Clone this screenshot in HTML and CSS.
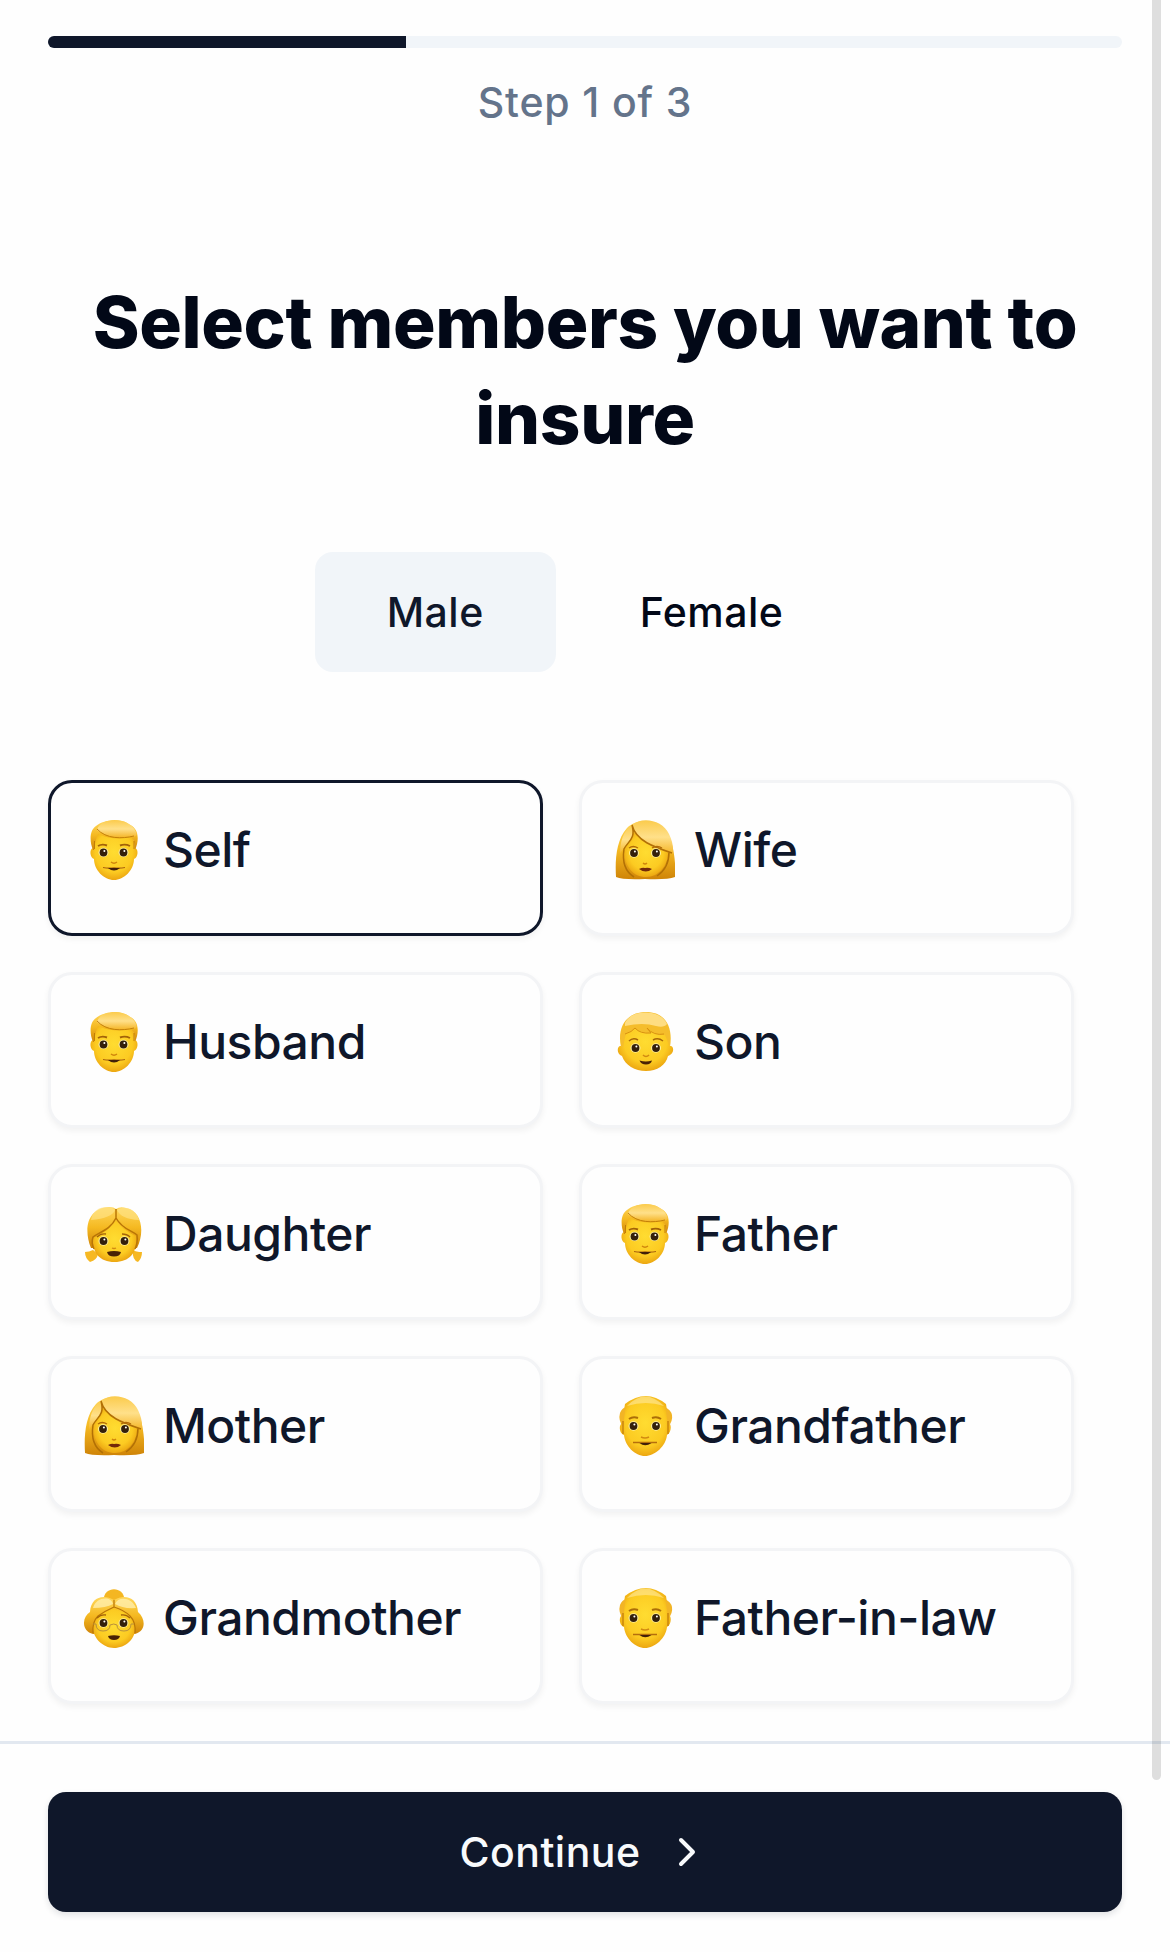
FILE: index.html
```html
<!DOCTYPE html>
<html lang="en">
<head>
<meta charset="utf-8">
<title>Select members</title>
<link rel="stylesheet" href="styles.css">
</head>
<body>
<svg class="defs" width="0" height="0" aria-hidden="true">
  <defs>
    <radialGradient id="skin" cx=".5" cy=".45" r=".6"><stop offset="0" stop-color="#ffdc31"/><stop offset=".65" stop-color="#fccb22"/><stop offset="1" stop-color="#e79b0c"/></radialGradient>
    <linearGradient id="hair" x1="0" y1="0" x2="0" y2="1"><stop offset="0" stop-color="#ffd75c"/><stop offset=".5" stop-color="#f5b921"/><stop offset="1" stop-color="#cf8408"/></linearGradient>
    <linearGradient id="shine" x1="0" y1="0" x2="0" y2="1"><stop offset="0" stop-color="#fbcb4c"/><stop offset=".5" stop-color="#ffe08a"/><stop offset="1" stop-color="#f4b425"/></linearGradient>
    <g id="eye"><ellipse rx="5" ry="4.7" fill="#fff0a0"/><circle r="3.9" fill="#34200b"/><circle cx=".9" cy="-1.4" r="1" fill="#fff"/></g>
    <g id="man">
      <path d="M9 28C5 29 6 38 10 39C10 50 20 60 30 60S50 50 50 39C54 38 55 29 51 28L48 9H12Z" fill="url(#skin)"/>
      <path d="M9 30C5 20 6 10 12 6C20-1 39-2 46 5C54 8 56 19 51 30L50 22C49 18 47 17 45 17C32 20 20 17 14 14C12 19 11 22 10 30Z" fill="url(#hair)"/>
      <path d="M13 10C16-3 45-4 52 12C54 16 51 17 47 17C35 19 24 17 16 12Q14 11 13 10Z" fill="url(#shine)"/>
      <path d="M13 9C22 19 38 19 50 16M10.500 21V29M50 21V29" fill="none" stroke="#bd7906" stroke-width=".9"/>
      <path d="M14 26Q18 23.500 23 25.500M36 25.500Q41 23.500 46 26" fill="none" stroke="#a36308" stroke-width="1.900"/>
      <use href="#eye" x="19.500" y="32.500"/><use href="#eye" x="39.500" y="32.500"/>
      <path d="M27 42Q30 44.500 33 42" fill="none" stroke="#cf850c" stroke-width="1.400"/>
      <path d="M19 47.500Q24 48.500 30 47.800Q36 48.500 41 47.500" fill="none" stroke="#a9620d" stroke-width="1.200"/><path d="M24 48H36Q30 53 24 48Z" fill="#422009"/>
    </g>
    <g id="woman">
      <path d="M1 57C0 41 1 20 12 8C22-2 39-1 49 9C59 20 61 43 60 57Q52 60 30 59Q8 60 1 57Z" fill="url(#hair)"/>
      <path d="M9 31L18 12L53 29C54 45 44 57 31 57S10 47 9 31Z" fill="url(#skin)"/>
      <path d="M17 5C27-4 48 0 54 14Q59 24 58 34C42 29 24 24 17 5Z" fill="url(#shine)"/>
      <path d="M17 5C21 19 12 22 5 34C5 22 8 11 17 5Z" fill="url(#shine)"/>
      <path d="M17 5C21 21 39 27 57 33M17 5C21 19 13 21 9 29C7 42 11 52 19 57M54 32Q54 48 42 56" fill="none" stroke="#b27005" stroke-width="1.500"/>
      <path d="M14 28Q18 25 23 28M37 28Q42 25 47 28" fill="none" stroke="#b16b08" stroke-width="1.300"/>
      <use href="#eye" x="19" y="33"/><use href="#eye" x="41" y="33"/>
      <path d="M28 43Q30 45 32 43" fill="none" stroke="#cf850c" stroke-width="1.300"/>
      <path d="M24 49Q28 47 30 48Q33 47 37 49Q31 54 24 49Z" fill="#742909"/>
    </g>
    <g id="boy">
      <path d="M6 34C2 33 1 42 7 44C10 53 20 59 31 59S51 53 53 44C60 42 59 33 55 34L52 14Q31-3 10 14Z" fill="url(#skin)"/>
      <path d="M6 35C2 17 10 0 31 0S58 17 55 35L50 23Q39 23 33 16L36 21Q25 21 20 16Q17 19 11 21L8 35Z" fill="#f5bd2b"/>
      <path d="M10 11C16-3 46-3 52 12Q49 16 41 14Q28 10 10 14Z" fill="#ffe391" opacity=".85"/>
      <path d="M10 22Q17 20 20 16Q25 22 36 21L32 16Q39 24 49 22" fill="none" stroke="#d89012" stroke-width="1"/>
      <path d="M14 29Q18 25 23 28M38 28Q43 25 48 29" fill="none" stroke="#a7670a" stroke-width="1.500"/>
      <use href="#eye" x="20.500" y="36"/><use href="#eye" x="41" y="36"/>
      <path d="M28 43Q31 46 34 43" fill="none" stroke="#d18a11" stroke-width="1.600"/>
      <path d="M24.500 48.500Q31 50.500 37 48.500Q36 52.500 31 52.500T24.500 48.500Z" fill="#492105"/>
    </g>
    <g id="girl">
      <path d="M9 46Q5 48 1 48Q1 54 6 58Q13 56 14 50ZM49 46Q48 56 54 58Q58 54 58 48Q52 48 49 46Z" fill="#f6b823"/>
      <path d="M7 44C-1 24 4 4 25 3Q30 3 32 5Q36 2 42 4C58 7 61 28 53 44Z" fill="url(#hair)"/>
      <path d="M9 34Q27 26 32 16Q38 26 52 32C54 49 45 58 30.500 58S8 49 9 34Z" fill="url(#skin)"/>
      <path d="M7 16C9 1 27 1 31 6Q28 14 7 16ZM33 6C42 0 53 7 55 16Q37 15 33 6Z" fill="#ffe488" opacity=".65"/>
      <path d="M32 5V14C27 25 16 28 9 33Q7 39 10 45M32 14C38 25 47 26 53 31Q54 39 51 45" fill="none" stroke="#b97506" stroke-width="1.500"/>
      <path d="M13 33Q17 29 22 30M38 30Q43 30 46 33" fill="none" stroke="#a4630a" stroke-width="1.300"/>
      <use href="#eye" x="19.500" y="37"/><use href="#eye" x="40.500" y="37"/>
      <path d="M28 44Q30 45 32 44" fill="none" stroke="#d18a11" stroke-width="1.300"/>
      <path d="M23 48Q30 46 37 48Q36 52.500 30 52.500T23 48Z" fill="#492105"/>
    </g>
    <g id="grandpa">
      <path d="M7 27C3 30 5 38 9 39C10 50 20 60 30 60S51 50 52 39C56 37 57 29 54 27L51 8Q31-8 10 8Z" fill="url(#skin)"/>
      <path d="M11 11Q7 12 5 17Q3 24 8 31Q9 22 10 15ZM50 11Q56 14 57 19Q58 25 53 31Q52 22 51 15Z" fill="#f2b426"/>
      <path d="M12 10Q30-9 49 10Q31 4 12 10Z" fill="#ffe99e" opacity=".6"/>
      <path d="M8 25V38M53 25V38" fill="none" stroke="#bf7908" stroke-width="1.200"/>
      <path d="M14 23Q18 20 23 22M37 22Q42 20 46 23" fill="none" stroke="#ac6e08" stroke-width="2"/>
      <use href="#eye" x="18.500" y="30"/><use href="#eye" x="41" y="30"/>
      <path d="M26 41Q30 43 34 41" fill="none" stroke="#d18a11" stroke-width="1.400"/>
      <path d="M18 46.500Q24 46.500 30 46.500Q36 46.500 42 46.500" fill="none" stroke="#b56e0c" stroke-width="1.500"/><path d="M24.500 47H36.500Q30 51.500 24.500 47Z" fill="#422009"/>
    </g>
    <g id="grandma">
      <path d="M20 14C17-3 43-3 40 14Z" fill="#f4b622"/>
      <path d="M9 46C-3 43-2 29 6 24C7 9 19 6 30 12C41 6 53 9 54 24C62 31 62 43 51 46Z" fill="url(#hair)"/>
      <path d="M9 36Q11 28 20 24L30 20L42 25Q50 29 51 37C53 51 41 60 30 60S7 49 9 36Z" fill="url(#skin)"/>
      <path d="M9 20C12 8 28 8 29 16Q22 20 9 20ZM31 16C34 8 48 9 52 20Q39 21 31 16Z" fill="#ffefad" opacity=".8"/>
      <path d="M30 12V19Q21 23 14 28Q8 34 9 45M30 19Q40 22 46 28Q52 34 51 45" fill="none" stroke="#b97506" stroke-width="1.200"/>
      <path d="M13 30Q17 26 22 27M37 27Q42 26 46 30" fill="none" stroke="#a4630a" stroke-width="1.300"/>
      <use href="#eye" x="19.500" y="35"/><use href="#eye" x="39.500" y="35"/>
      <path d="M12 36Q12 43 19 43T26 37Q30 35 33 37Q33 43 40 43T47 36M12 36H9M47 36H50" fill="none" stroke="#b8903c" stroke-width="1"/>
      <path d="M24 48Q30 46.500 36 48Q35 52 30 52T24 48Z" fill="#492105"/>
    </g>
  </defs>
</svg>
<div class="page">
  <main class="content">
    <div class="progress"><div class="progress-fill"></div></div>
    <p class="step">Step 1 of 3</p>
    <h1 class="title">Select members you want to insure</h1>
    <div class="tabs">
      <button class="tab tab-active">Male</button>
      <button class="tab">Female</button>
    </div>
    <div class="members">
      <div class="card card-selected"><svg class="emoji" viewBox="0 0 60 60"><use href="#man"/></svg><span>Self</span></div>
      <div class="card"><svg class="emoji" viewBox="0 0 60 60"><use href="#woman"/></svg><span>Wife</span></div>
      <div class="card"><svg class="emoji" viewBox="0 0 60 60"><use href="#man"/></svg><span>Husband</span></div>
      <div class="card"><svg class="emoji" viewBox="0 0 60 60"><use href="#boy"/></svg><span>Son</span></div>
      <div class="card"><svg class="emoji" viewBox="0 0 60 60"><use href="#girl"/></svg><span>Daughter</span></div>
      <div class="card"><svg class="emoji" viewBox="0 0 60 60"><use href="#man"/></svg><span>Father</span></div>
      <div class="card"><svg class="emoji" viewBox="0 0 60 60"><use href="#woman"/></svg><span>Mother</span></div>
      <div class="card"><svg class="emoji" viewBox="0 0 60 60"><use href="#grandpa"/></svg><span>Grandfather</span></div>
      <div class="card"><svg class="emoji" viewBox="0 0 60 60"><use href="#grandma"/></svg><span>Grandmother</span></div>
      <div class="card"><svg class="emoji" viewBox="0 0 60 60"><use href="#grandpa"/></svg><span>Father-in-law</span></div>
    </div>
  </main>
  <footer class="footer">
    <button class="continue"><span>Continue</span><svg class="chevron" viewBox="0 0 24 24"><path d="m9 18 6-6-6-6"/></svg></button>
  </footer>
  <div class="scrollbar"></div>
</div>
</body>
</html>
```
FILE: styles.css
```css
* { box-sizing: border-box; }
body { margin: 0; background: #fefefe; color: #020817; font-family: Inter, "Liberation Sans", sans-serif; }
button { border: 0; font: inherit; color: inherit; }
.defs { display: block; height: 0; }
.page { position: relative; height: 1952px; display: flex; flex-direction: column; overflow: hidden; }
.content { flex: 1; padding: 36px 48px 0; }
.progress { height: 12px; border-radius: 6px; background: #f1f5f9; overflow: hidden; }
.progress-fill { width: 33.333%; height: 100%; background: #0f172a; }
.step { margin: 24px 0 0; text-align: center; font-size: 41px; line-height: 60px; font-weight: 530; color: #64748b; letter-spacing: .85px; }
.title { margin: 142px 0 0; text-align: center; font-size: 71px; line-height: 96px; font-weight: 800; letter-spacing: -.35px; }
.tabs { margin-top: 86px; display: flex; justify-content: center; gap: 12px; }
.tab { height: 120px; padding: 0 72px; border-radius: 18px; background: transparent; font-size: 41px; font-weight: 530; letter-spacing: .45px; }
.tab-active { background: #f1f5f9; color: #0f172a; }
.members { width: 1026px; margin-top: 108px; display: grid; grid-template-columns: 1fr 1fr; gap: 36px; }
.card { height: 156px; padding: 37px 33px; display: flex; align-items: flex-start; gap: 19px; border: 3px solid #f3f4f6; border-radius: 24px; background: #fefefe; box-shadow: 0 3px 6px rgba(0,0,0,.05); font-size: 48px; line-height: 60px; font-weight: 530; letter-spacing: -.5px; color: #0f172a; }
.card-selected { border-color: #0f172a; }
.emoji { width: 60px; height: 60px; flex: none; }
.footer { height: 211px; padding: 48px; border-top: 3px solid #e2e8f0; background: #fefefe; }
.continue { width: 100%; height: 120px; display: flex; align-items: center; justify-content: center; gap: 22px; border-radius: 18px; background: #0f172a; color: #f8fafc; font-size: 41px; font-weight: 530; letter-spacing: .5px; box-shadow: 0 3px 6px rgba(15,23,42,.12); }
.chevron { width: 48px; height: 48px; fill: none; stroke: currentColor; stroke-width: 2; stroke-linecap: round; stroke-linejoin: round; }
.scrollbar { position: absolute; top: -10px; right: 9px; width: 9px; height: 1790px; border-radius: 5px; background: rgba(0,0,0,.125); }
```
